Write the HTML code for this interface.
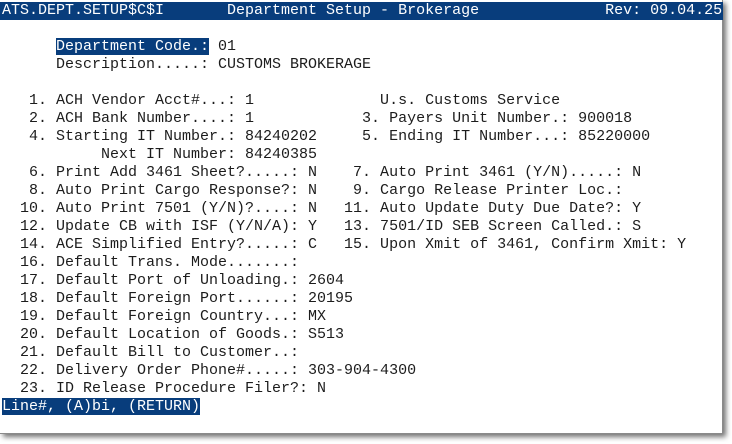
<!DOCTYPE html>
<html><head><meta charset="utf-8"><style>
html,body{margin:0;padding:0;background:#fff;width:732px;height:444px;overflow:hidden}
#t{position:absolute;left:0;top:0;width:722px;height:433px;background:#fff;border-right:1px solid #8a8a8a;border-bottom:1px solid #8a8a8a;box-shadow:3px 3px 5px rgba(0,0,0,.55)}
pre{position:absolute;left:2px;top:2px;margin:0;font-family:"Liberation Mono",monospace;font-size:15px;line-height:18px;color:#1c1c1c;letter-spacing:0}
.h{background:#083d7c;color:#fff}
#bar{position:absolute;left:0;top:2px;width:723px;height:18px;background:#083d7c}
</style></head><body>
<div id="t"><div id="bar"></div>
<pre><span class="h">ATS.DEPT.SETUP$C$I       Department Setup - Brokerage              Rev: 09.04.25</span>

      <span class="h">Department Code.:</span> 01
      Description.....: CUSTOMS BROKERAGE

   1. ACH Vendor Acct#...: 1              U.s. Customs Service
   2. ACH Bank Number....: 1            3. Payers Unit Number.: 900018
   4. Starting IT Number.: 84240202     5. Ending IT Number...: 85220000
           Next IT Number: 84240385
   6. Print Add 3461 Sheet?.....: N    7. Auto Print 3461 (Y/N).....: N
   8. Auto Print Cargo Response?: N    9. Cargo Release Printer Loc.:
  10. Auto Print 7501 (Y/N)?....: N   11. Auto Update Duty Due Date?: Y
  12. Update CB with ISF (Y/N/A): Y   13. 7501/ID SEB Screen Called.: S
  14. ACE Simplified Entry?.....: C   15. Upon Xmit of 3461, Confirm Xmit: Y
  16. Default Trans. Mode.......:
  17. Default Port of Unloading.: 2604
  18. Default Foreign Port......: 20195
  19. Default Foreign Country...: MX
  20. Default Location of Goods.: S513
  21. Default Bill to Customer..:
  22. Delivery Order Phone#.....: 303-904-4300
  23. ID Release Procedure Filer?: N
<span class="h">Line#, (A)bi, (RETURN)</span></pre>
</div>
</body></html>
